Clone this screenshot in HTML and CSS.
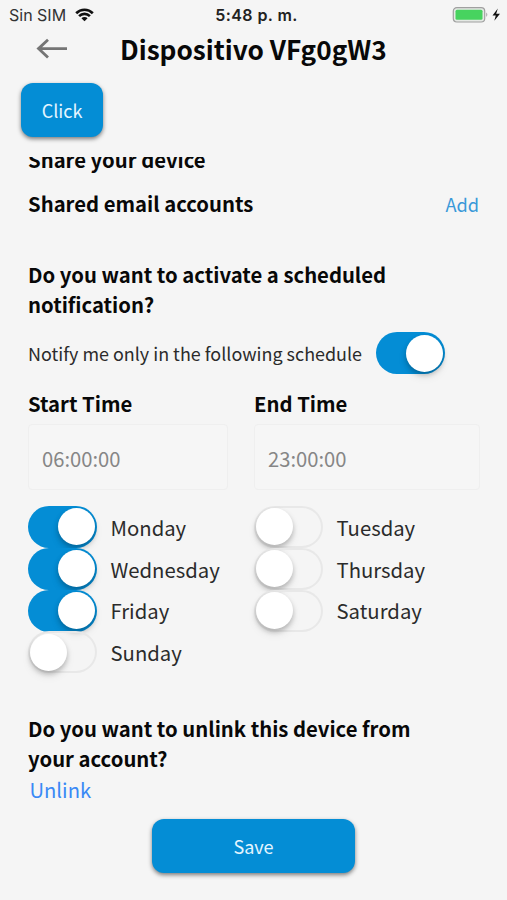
FILE: index.html
```html
<!DOCTYPE html>
<html lang="en">
<head>
<meta charset="utf-8">
<title>Dispositivo VFg0gW3</title>
<link rel="stylesheet" href="styles.css">
</head>
<body>
<div class="status">
  <div class="carrier"><span>Sin SIM</span>
    <svg class="wifi" width="19" height="14" viewBox="0 0 20 15" fill="none" stroke="#111" stroke-width="2.8"><path d="M1.1 5.6a12.6 12.6 0 0 1 17.800 0M4.200 8.700a8.200 8.200 0 0 1 11.600 0"/><path d="M10 14.200 6.700 10.900a4.700 4.700 0 0 1 6.600 0z" fill="#111" stroke="none"/></svg>
  </div>
  <span class="clock">5:48 p. m.</span>
  <svg class="battery" width="50" height="18" viewBox="0 0 50 18"><rect x="1.300" y="1.600" width="31.400" height="14.400" rx="3.500" fill="#e4e8e4" stroke="#a0a0a0" stroke-width="1.200"/><rect x="3.500" y="3.800" width="27" height="10" rx="1.500" fill="#47d35f"/><path d="M34.300 6.600q2 2.200 0 4.400z" fill="#999"/><path d="M45.800 2.500 40.500 9.500h3.300L42.300 14.800 48 7.700h-3.800z" fill="#111"/></svg>
</div>
<header class="header">
  <svg class="back" width="32" height="22" viewBox="0 0 32 22" fill="none" stroke="#757575" stroke-width="2.800"><path d="M31 10.600H2.500M12 1.800 2.500 10.600 12 19.600"/></svg>
  <h1>Dispositivo VFg0gW3</h1>
</header>
<button class="btn click">Click</button>
<main class="content">
  <h2 class="share"><span>Share your device</span></h2>
  <div class="row accounts"><h2>Shared email accounts</h2><a class="add">Add</a></div>
  <h2 class="question">Do you want to activate a scheduled<br>notification?</h2>
  <div class="row notify"><span>Notify me only in the following schedule</span><i class="toggle on"></i></div>
  <div class="times">
    <div><h2>Start Time</h2><div class="field first">06:00:00</div></div>
    <div><h2>End Time</h2><div class="field">23:00:00</div></div>
  </div>
  <div class="days">
    <div class="day"><i class="toggle on"></i><span>Monday</span></div>
    <div class="day"><i class="toggle"></i><span>Tuesday</span></div>
    <div class="day"><i class="toggle on"></i><span>Wednesday</span></div>
    <div class="day"><i class="toggle"></i><span>Thursday</span></div>
    <div class="day"><i class="toggle on"></i><span>Friday</span></div>
    <div class="day"><i class="toggle"></i><span>Saturday</span></div>
    <div class="day"><i class="toggle"></i><span>Sunday</span></div>
  </div>
  <h2 class="question unlink-q">Do you want to unlink this device from<br>your account?</h2>
  <a class="unlink">Unlink</a>
</main>
<button class="btn save">Save</button>
</body>
</html>
```
FILE: styles.css
```css
* { box-sizing: border-box; }
body { margin: 0; width: 507px; height: 900px; overflow: hidden; background: #f5f5f5; color: #2b2b2b; font-family: "Noto Sans CJK SC", sans-serif; white-space: nowrap; }
h1, h2 { margin: 0; color: #080808; font-weight: 700; }
.status { display: grid; grid-template-columns: 1fr auto 1fr; height: 29px; padding: 0 5px 0 9px; align-items: center; font: 16px/29px Inter, sans-serif; }
.carrier { display: flex; align-items: center; gap: 9px; color: #333; }
.carrier span, .clock { padding-top: 1px; }
.wifi { display: block; margin-top: -1px; }
.clock { font-weight: 600; color: #222; letter-spacing: .4px; margin-left: 2px; }
.battery { justify-self: end; margin-top: -1px; }
.header { display: flex; height: 38px; }
.back { margin: 9px 0 0 36px; }
h1 { margin-left: 52px; font-size: 26.200px; line-height: 40px; }
.btn { display: block; border: 0; border-radius: 12px; background: #048dd5; color: #e4f5ff; font: 18px/54px "Noto Sans CJK SC", sans-serif; height: 54px; padding: 0; box-shadow: 0 2px 4px rgba(0,0,0,.5); }
.click { width: 82px; margin: 16px 0 0 21px; }
.content { height: 662px; margin-top: 20px; padding: 0 27px 0 28px; }
h2 { font-size: 20.300px; line-height: 30px; }
.share { display: flex; height: 17px; overflow: hidden; align-items: flex-end; }
.row { display: flex; align-items: center; }
.accounts { justify-content: space-between; margin-top: 13px; height: 32px; }
.add { padding-top: 1px; font-size: 18.200px; color: #3999d9; margin-right: 1px; }
.question { margin-top: 41px; line-height: 29.500px; }
.notify { gap: 14px; height: 42px; margin-top: 13px; font-size: 17.940px; }
.toggle { display: block; flex: none; width: 69px; height: 42px; padding: 2.500px 1.500px; border-radius: 21px; }
.toggle::after { content: ""; display: block; width: 37px; height: 37px; border-radius: 50%; background: #fff; box-shadow: 0 3px 5px rgba(0,0,0,.22), 0 5px 10px rgba(0,0,0,.08); }
.toggle:not(.on) { box-shadow: inset 0 0 0 2px #e8e8e8; }
.on { background: #048dd5; }
.on::after { margin-left: 28px; }
.times { display: grid; grid-template-columns: 226px 226px; margin-top: 14px; }
.field { width: 226px; height: 66px; margin-top: 6px; padding-left: 13px; border: 1px solid #efefef; border-radius: 4px; background: #f6f6f6; color: #868686; font-size: 20.200px; line-height: 68px; }
.first { width: 200px; }
.days { display: grid; grid-template-columns: 226px 226px; grid-auto-rows: 41.800px; margin-top: 16px; }
.day { display: flex; align-items: center; gap: 13.500px; font-size: 20.300px; }
.unlink-q { margin-top: 41px; }
.unlink { display: block; margin: 1px 0 0 1.500px; font-size: 20.200px; line-height: 32px; color: #3989f5; }
.save { width: 203px; margin: 0 auto; }
```
